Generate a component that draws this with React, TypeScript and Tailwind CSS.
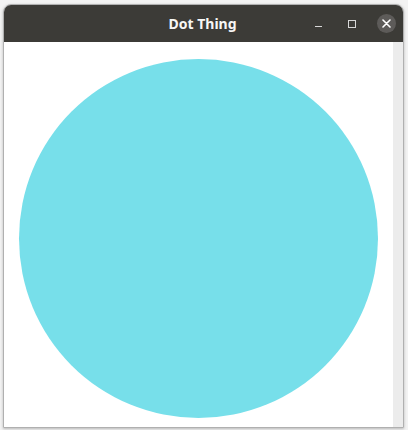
import React from "react";

export default function App() {
  return (
    <div className="w-[408px] h-[430px] bg-[#f3f3f3] pt-[4px] pl-[3px]" style={{ fontFamily: '"Noto Sans", "DejaVu Sans", sans-serif' }}>
      <div className="w-[401px] h-[424px] flex flex-col border border-[#b0b0b0] rounded-t-[8px] overflow-hidden shadow-[0_1px_3px_rgba(0,0,0,0.25)]">
        <div className="h-[37px] bg-[#3c3b37] relative flex items-center justify-center shrink-0">
          <span className="text-[14px] font-bold text-[#f7f6f5] ml-[-2px]">Dot Thing</span>
          <div className="absolute right-0 top-0 h-full flex items-center">
            <div className="w-[34px] flex justify-center">
              <div className="w-[7px] h-[1px] bg-[#d8d8d8] mt-[6px]" />
            </div>
            <div className="w-[34px] flex justify-center">
              <div className="w-[8px] h-[8px] border border-[#d8d8d8]" />
            </div>
            <div className="w-[34px] flex justify-center">
              <div className="w-[19px] h-[19px] rounded-full bg-[#5d5b59] flex items-center justify-center">
                <svg width="9" height="9" viewBox="0 0 9 9">
                  <path d="M1 1 L8 8 M8 1 L1 8" stroke="#ffffff" strokeWidth="1.6" strokeLinecap="round" />
                </svg>
              </div>
            </div>
          </div>
        </div>
        <div className="flex-1 flex bg-white">
          <div className="flex-1 flex justify-center items-start pt-[17px]">
            <div className="w-[359px] h-[359px] rounded-full bg-[#77dfea]" />
          </div>
          <div className="w-[10px] bg-[#ececec]" />
        </div>
      </div>
    </div>
  );
}
